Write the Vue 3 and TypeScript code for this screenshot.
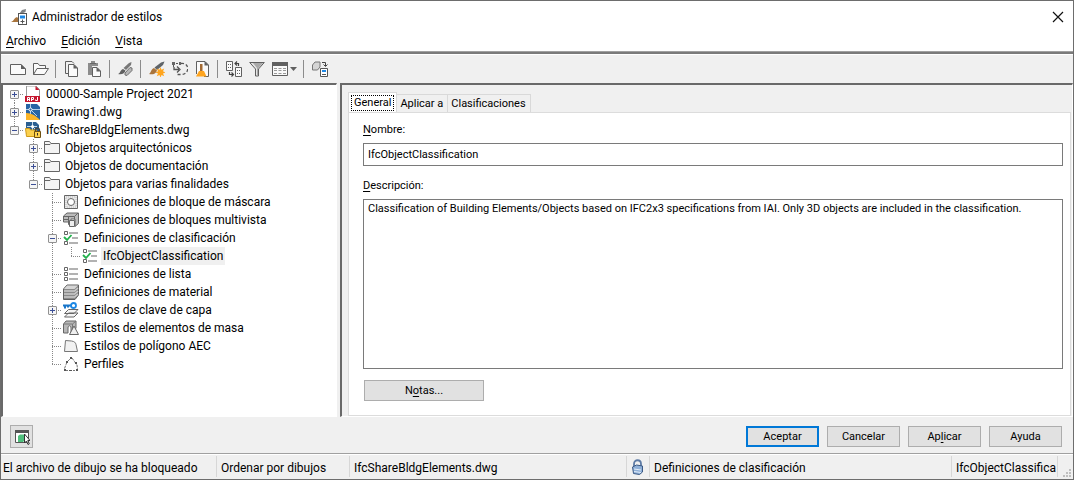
<script setup lang="ts">
import { ref } from 'vue'

type Guide = '' | 'v' | 't' | 'l'
interface TreeRow {
  label: string
  icon: string
  guides: Guide[]
  toggle?: '+' | '-'
}
interface ToolItem {
  icon?: string
  title?: string
  wide?: boolean
}

const icons: Record<string, string> = {
  app: `<path d="M0 13c3-1 3-4 6-5l2 2v3z" fill="#a9743c"/><path d="M7 6.500L11 1l4-1-.5 3L11 4.500 8 8z" fill="#808386"/><rect x="7.500" y="4.500" width="8" height="11" fill="#fff" stroke="#555"/><path d="M9 6.500h5v3H9z" fill="#1e88e5"/><path d="M9.500 12.500h4M11.500 10.500v4" stroke="#555" fill="none"/>`,
  blank: `<path d="M.5 3.500H11l4.500 4.500v5.500H.5z" fill="#fafafa" stroke="#606060"/><path d="M11 3v5h5z" fill="#606060"/>`,
  open: `<path d="M.5 13.500v-11h4.500l1.500 2h6v3M.5 13.500L4 7.500h11.500l-4 6z" fill="#fafafa" stroke="#606060"/>`,
  copy: `<path d="M4 12.500H1.500v-12H8l2 2" fill="none" stroke="#606060"/><path d="M4.500 3.500H10l3.500 3.500v8.500h-9z" fill="#fafafa" stroke="#606060"/><path d="M9.500 3v4.500H14z" fill="#606060"/>`,
  paste: `<path d="M1 2h3V0h4v2h3v3H5v9H1z" fill="#8c8c8c"/><path d="M3 2h6v1H3z" fill="#666"/><path d="M5.500 6.500H10l3.500 3.500v5.500h-8z" fill="#fafafa" stroke="#606060"/><path d="M9.500 6v4.500H14z" fill="#606060"/>`,
  purge: `<path d="M0 13c2 0 2-4 5-5l2.500 1.500C7 12 4 14 0 13z" fill="#606060"/><path d="M5.500 7L11 2l2.500-1L13 4 8 9z" fill="#777"/><path d="M7 12l5-5.500 2 .5v2.500l-5 5-2-.5z" fill="#b7b7b7" stroke="#707070"/>`,
  newstyle: `<path d="M0 13c2-1 2-5 5-6l3 2.500C7 13 3 14 0 13z" fill="#a9743c"/><path d="M5.500 6.500L12 1.500l3.500-1L14 4 8 9z" fill="#5f6468"/><path d="M11.500 6l1 2.800 2.700-1.200-1.200 2.700 2.500 1.200-2.500 1 1.200 2.800-2.700-1.200-1 2.600-1-2.600-2.700 1.200L9 12.500l-2.500-1L9 10.300 7.800 7.600l2.700 1.200z" fill="#ffa51f"/>`,
  reassign: `<path d="M1.500 6V2.500h7" fill="none" stroke="#555" stroke-dasharray="2 1"/><path d="M9 2.500c9-1 9 11 0 11H5" fill="none" stroke="#555" stroke-dasharray="3 2" stroke-width="1.300"/><path d="M2 6v2.500h5M5 5.500l3 3-3 3" fill="none" stroke="#555" stroke-width="1.300"/><path d="M0 1h3v3H0zM7 1h2v3H7z" fill="#666"/>`,
  broom: `<path d="M1.500 13V.5H10L13.500 4v11.500H9" fill="#fafafa" stroke="#606060"/><path d="M9.500 0v4.500H14z" fill="#606060"/><path d="M5 3h2.500v7H5z" fill="#a36a32"/><path d="M4 10h5l2.500 5.500H1z" fill="#ffa51f"/>`,
  swap: `<path d="M.5.500h6v9h-6zM9.500 6.500h6v9h-6z" fill="#fafafa" stroke="#606060"/><path d="M2 3.500h1M4 3.500h1M2 6.500h1M4 6.500h1M11 9.500h1M13 9.500h1M11 12.500h1M13 12.500h1" stroke="#606060"/><path d="M9 2.500h3.500v2.500M11 .5l-2 2 2 2M3.500 11v2.500H7M5.500 11.500l2 2-2 2" fill="none" stroke="#444" stroke-width="1.200"/>`,
  filter: `<path d="M.7 1.500h14.600L9.500 8v7h-3V8z" fill="#e4e4e4" stroke="#606060"/><path d="M4 2h10L9 7.500v7H8V7z" fill="#aaa"/>`,
  views: `<path d="M.5 1.500h15v13H.5z" fill="#fafafa" stroke="#606060"/><path d="M0 1h16v4H0z" fill="#606060"/><path d="M2 7.500h3M6.500 7.500h3M11 7.500h3M2 9.500h3M6.500 9.500h3M11 9.500h3M2 12.500h3M6.500 12.500h3M11 12.500h3" stroke="#999"/>`,
  sync: `<path d="M.5 4L3 1h5v5L5.500 9h-5z" fill="#d5d5d5" stroke="#777"/><path d="M10 1.500h3.500V5M11.500 3.500l2 2 2-2" fill="none" stroke="#444"/><path d="M8.500 7.500h7v8h-7z" fill="#fff" stroke="#555"/><path d="M10 9h4v2h-4z" fill="#1e88e5"/><path d="M10 13.500h4" stroke="#555"/>`,
  apj: `<path d="M1.500 0H11l3.500 3.500V11h-13z" fill="#fff" stroke="#999"/><path d="M10.500 0v4h4z" fill="#c5162e"/><path d="M0 10h15v6H0z" fill="#c5162e"/><path d="M2.500 15v-3.500h2V15M2.500 13.500h2M6.500 15v-3.500h2v2h-2M12.500 11v3.500h-2v-1" fill="none" stroke="#fff"/>`,
  dwg: `<path d="M1 0h11l3 3v13H1z" fill="#2764a5"/><path d="M1 9c6 0 10 3 14 7H1z" fill="#fbb52a"/><path d="M1 5.500h3M7 5.500h8M5.500 0v4M5.500 7v3M7 7l5 5" stroke="#b5cfe8" fill="none"/><circle cx="5.500" cy="5.500" r="1.500" fill="#2764a5" stroke="#fff"/>`,
  dwglock: `<path d="M1 0h10l3 3v9H1z" fill="#2b5f92"/><path d="M2 4.500h10M7.500 0v9M8 5l5 5" stroke="#c5d9ea"/><circle cx="7.500" cy="4.500" r="1.500" fill="#fff"/><path d="M.5 6.500h4l1 1.500h6v6.500h-10z" fill="#fbd04d" stroke="#d09a18"/><path d="M10.500 9.500V8c0-2.500 4-2.500 4 0v1.500" fill="none" stroke="#444" stroke-width="1.300"/><path d="M9.500 9.500h6v6h-6z" fill="#ffd24d" stroke="#6e5011"/><path d="M12.500 11v2.500" stroke="#333"/>`,
  folder: `<path d="M.5 13.500v-12h5l1.500 2h8.500v10z" fill="#f4f4f4" stroke="#666"/><path d="M.5 4.500H6l1-1" fill="none" stroke="#666"/>`,
  mask: `<path d="M1.500 1.500h13v13h-13z" fill="#e9e9e9" stroke="#666"/><path d="M3 3h10v10H3z" fill="none" stroke="#bbb" stroke-dasharray="1 1"/><circle cx="8" cy="8" r="3.500" fill="#fff" stroke="#666"/>`,
  multi: `<path d="M.5 4L4 1h11.500v10.500L12 14.500V7H8v5.500H5.500V10h-5z" fill="#bbb" stroke="#666"/><path d="M.5 4.500h11v3M11.500 4.500L15 1M5.500 4.500V10M.5 7.500h5" fill="none" stroke="#666"/><path d="M6.500 8.500h5v6h-5z" fill="#eee" stroke="#666"/>`,
  classif: `<path d="M1.500 1.500h3v3h-3zM1.500 11.500h3v3h-3z" fill="#fff" stroke="#666"/><path d="M6 3h9M9 8h6M6 13h9" stroke="#666" stroke-width="1.200"/><path d="M1 7l3 3 4.500-5" fill="none" stroke="#22b14c" stroke-width="1.800"/>`,
  list: `<path d="M1.500 1.500h3v3h-3zM1.500 6.500h3v3h-3zM1.500 11.500h3v3h-3z" fill="#fff" stroke="#666"/><path d="M6 3h9M6 8h9M6 13h9" stroke="#666" stroke-width="1.200"/>`,
  material: `<path d="M.5 5L4 1h11.500v10L12 15.500H.5z" fill="#8a8a8a" stroke="#606060"/><path d="M1 5h10.500L15 1.500H4z" fill="#d5d5d5"/><path d="M1 7h10.500L15 4M1 10h10.500L15 7M1 13h10.500L15 10" fill="none" stroke="#ccc" stroke-width="1.500"/>`,
  layerkey: `<path d="M1.500 11.500l4-4H15l-4 4zM1.500 15l4-4H15l-4 4z" fill="#f4f4f4" stroke="#666"/><path d="M0 3.500h9M2 3.500v3M5 3.500v2" stroke="#1976c9" stroke-width="2" fill="none"/><circle cx="10.500" cy="3.500" r="2.500" fill="#fff" stroke="#1e88e5" stroke-width="1.800"/>`,
  mass: `<path d="M.5 4L3 1h10v7l-3 5H8V8c0-3-3-3-3 0v5H.5z" fill="#b8b8b8" stroke="#666"/><path d="M1 4h8.500L13 1M9.500 4v6" stroke="#777" fill="none"/><path d="M11 6l4.500 8.500h-9z" fill="#efefef" stroke="#666"/>`,
  polygon: `<path d="M2.500 2.500l6 .5c3 .5 4 1.500 4.500 3.500l1.500 7H1.500z" fill="#f2f2f2" stroke="#777"/>`,
  profile: `<path d="M1.500 12.500L4 6l4-4M9 2l5 7 .5 4M2 14.500h10" fill="none" stroke="#777" stroke-dasharray="3 1"/><path d="M7 1h2v2H7zM3 5h2v2H3zM12 6h2v2h-2zM1 13h2v2H1zM6 14h3v1H6zM13 13h2v2h-2z" fill="#555"/>`,
  lock: `<path d="M4 7V5c0-5 7-5 7 0v3" fill="none" stroke="#5d7ba5" stroke-width="1.800"/><path d="M2.500 8l4-2 6 1v6l-3 2.500-6-1z" fill="#8fb0d8" stroke="#3c5a85"/><path d="M4 10l7 1M4 12.500l7 1" stroke="#e3edf8"/>`,
  preview: `<path d="M1.500 1.500h13v12h-13z" fill="#fff" stroke="#555"/><path d="M1 1h14v3H1z" fill="#555"/><path d="M4 7l2-1.500h4V12l-1 1H4z" fill="#4fbf7c"/><path d="M10.500 5v9l2-2 1.500 3.500 1.300-.7-1.500-3.300H16z" fill="#fff" stroke="#333"/>`,
}

const tools: ToolItem[] = [
  { icon: 'blank', title: 'Nuevo dibujo' },
  { icon: 'open', title: 'Abrir dibujo' },
  {},
  { icon: 'copy', title: 'Copiar' },
  { icon: 'paste', title: 'Pegar' },
  {},
  { icon: 'purge', title: 'Limpiar' },
  {},
  { icon: 'newstyle', title: 'Nuevo estilo' },
  { icon: 'reassign', title: 'Establecer desde' },
  { icon: 'broom', title: 'Limpiar estilos' },
  {},
  { icon: 'swap', title: 'Alternar vista' },
  { icon: 'filter', title: 'Filtrar' },
  { icon: 'views', title: 'Vistas', wide: true },
  {},
  { icon: 'sync', title: 'Sincronizar' },
]

const rows: TreeRow[] = [
  { label: '00000-Sample Project 2021', icon: 'apj', guides: ['t'], toggle: '+' },
  { label: 'Drawing1.dwg', icon: 'dwg', guides: ['t'], toggle: '+' },
  { label: 'IfcShareBldgElements.dwg', icon: 'dwglock', guides: ['l'], toggle: '-' },
  { label: 'Objetos arquitectónicos', icon: 'folder', guides: ['', 't'], toggle: '+' },
  { label: 'Objetos de documentación', icon: 'folder', guides: ['', 't'], toggle: '+' },
  { label: 'Objetos para varias finalidades', icon: 'folder', guides: ['', 'l'], toggle: '-' },
  { label: 'Definiciones de bloque de máscara', icon: 'mask', guides: ['', '', 't'] },
  { label: 'Definiciones de bloques multivista', icon: 'multi', guides: ['', '', 't'] },
  { label: 'Definiciones de clasificación', icon: 'classif', guides: ['', '', 't'], toggle: '-' },
  { label: 'IfcObjectClassification', icon: 'classif', guides: ['', '', 'v', 'l'] },
  { label: 'Definiciones de lista', icon: 'list', guides: ['', '', 't'] },
  { label: 'Definiciones de material', icon: 'material', guides: ['', '', 't'] },
  { label: 'Estilos de clave de capa', icon: 'layerkey', guides: ['', '', 't'], toggle: '+' },
  { label: 'Estilos de elementos de masa', icon: 'mass', guides: ['', '', 't'] },
  { label: 'Estilos de polígono AEC', icon: 'polygon', guides: ['', '', 't'] },
  { label: 'Perfiles', icon: 'profile', guides: ['', '', 'l'] },
]

const tabs = ['General', 'Aplicar a', 'Clasificaciones']
const activeTab = ref('General')
const selected = ref('IfcObjectClassification')
const nombre = ref('IfcObjectClassification')
const descripcion = ref(
  'Classification of Building Elements/Objects based on IFC2x3 specifications from IAI. Only 3D objects are included in the classification.',
)
</script>

<template>
  <div class="window">
    <header class="titlebar">
      <svg class="icon" viewBox="0 0 16 16" v-html="icons.app"></svg>
      <h1>Administrador de estilos</h1>
      <button class="close" aria-label="Cerrar">
        <svg width="12" height="12" viewBox="0 0 12 12"><path d="M1 1l10 10M11 1L1 11" stroke="#111" stroke-width="1.200" /></svg>
      </button>
    </header>
    <nav class="menu">
      <button><u>A</u>rchivo</button>
      <button><u>E</u>dición</button>
      <button><u>V</u>ista</button>
    </nav>
    <div class="toolbar">
      <template v-for="(t, i) in tools" :key="i">
        <button v-if="t.icon" class="tool" :class="{ wide: t.wide }" :aria-label="t.title">
          <svg class="icon" viewBox="0 0 16 16" v-html="icons[t.icon]"></svg>
          <svg v-if="t.wide" width="7" height="4" viewBox="0 0 7 4"><path d="M0 0h7L3.500 4z" fill="#606060" /></svg>
        </button>
        <span v-else class="sep"></span>
      </template>
    </div>

    <main class="body">
      <ul class="tree">
        <li v-for="row in rows" :key="row.label" class="row">
          <span v-for="(g, i) in row.guides" :key="i" class="guide" :class="g">
            <button
              v-if="row.toggle && i === row.guides.length - 1"
              class="toggle"
              :class="{ plus: row.toggle === '+' }"
              :aria-label="row.label"
            ></button>
          </span>
          <svg class="icon node" viewBox="0 0 16 16" v-html="icons[row.icon]"></svg>
          <button class="label" :class="{ selected: selected === row.label }" @click="selected = row.label">
            {{ row.label }}
          </button>
        </li>
      </ul>

      <section class="detail">
        <div class="tabs" role="tablist">
          <button
            v-for="tab in tabs"
            :key="tab"
            class="tab"
            role="tab"
            :aria-selected="activeTab === tab"
            :class="{ active: activeTab === tab }"
            @click="activeTab = tab"
          >
            <span>{{ tab }}</span>
          </button>
        </div>
        <div class="panel">
          <label for="nombre"><u>N</u>ombre:</label>
          <input id="nombre" v-model="nombre" type="text" />
          <label for="descripcion"><u>D</u>escripción:</label>
          <textarea id="descripcion" v-model="descripcion" spellcheck="false"></textarea>
          <button class="btn notes">N<u>o</u>tas...</button>
        </div>
      </section>
    </main>

    <footer class="actions">
      <button class="preview" aria-label="Vista previa">
        <svg class="icon" viewBox="0 0 16 16" v-html="icons.preview"></svg>
      </button>
      <button class="btn primary">Aceptar</button>
      <button class="btn">Cancelar</button>
      <button class="btn">Ap<u>l</u>icar</button>
      <button class="btn">Ayuda</button>
    </footer>

    <div class="status">
      <span class="cell c1">El archivo de dibujo se ha bloqueado</span>
      <span class="cell c2">Ordenar por dibujos</span>
      <span class="cell c3">IfcShareBldgElements.dwg</span>
      <span class="cell c4"><svg class="icon" viewBox="0 0 16 16" v-html="icons.lock"></svg></span>
      <span class="cell c5">Definiciones de clasificación</span>
      <span class="cell c6">IfcObjectClassifica</span>
      <svg class="grip" width="10" height="10" viewBox="0 0 10 10">
        <path d="M6 0h2v2H6zM3 3h2v2H3zM6 3h2v2H6zM0 6h2v2H0zM3 6h2v2H3zM6 6h2v2H6z" fill="#bfbfbf" />
      </svg>
    </div>
  </div>
</template>

<style>
body {
  background: #f0f0f0;
}
</style>

<style scoped>
.window {
  box-sizing: border-box;
  display: flex;
  flex-direction: column;
  min-height: 100vh;
  border: 1px solid #6d6d6d;
  background: #f0f0f0;
  color: #000;
  font: 12px/18px Roboto, 'Open Sans', sans-serif;
}
button {
  margin: 0;
  padding: 0;
  border: 0;
  background: none;
  color: inherit;
  font: inherit;
  white-space: nowrap;
}
u {
  text-underline-offset: 2px;
}
.icon {
  display: block;
  flex: none;
  width: 16px;
  height: 16px;
}
.titlebar {
  display: flex;
  align-items: center;
  height: 31px;
  padding: 0 9px 0 10px;
  background: #fff;
}
h1 {
  flex: 1;
  margin: 0 0 0 5px;
  font: inherit;
}
.close svg {
  display: block;
}
.menu {
  display: flex;
  align-items: flex-start;
  gap: 15px;
  height: 19px;
  padding: 0 5px;
  border-bottom: 1px solid #a0a0a0;
  background: #fff;
}
.toolbar {
  display: flex;
  align-items: center;
  height: 29px;
  padding-left: 5px;
  border-top: 2px solid #7a7a7a;
  box-shadow: inset 0 1px #fff;
}
.tool {
  display: flex;
  align-items: center;
  justify-content: center;
  width: 23px;
  height: 24px;
}
.wide {
  width: 32px;
  gap: 2px;
}
.sep {
  width: 1px;
  height: 18px;
  margin: 0 4px 0 3px;
  background: #8c8c8c;
}
.body {
  flex: 1;
  display: flex;
  gap: 3px;
}
.tree,
.detail {
  box-sizing: border-box;
  border: solid;
  border-width: 2px 1px 1px 2px;
  border-color: #696969 #fff #fff #696969;
}
.tree {
  flex: none;
  width: 336px;
  margin: 0;
  padding: 0 2px;
  background: #fff;
  list-style: none;
}
.row {
  display: flex;
  align-items: center;
  height: 18px;
}
.guide {
  display: flex;
  align-items: center;
  width: 19px;
  height: 18px;
  background-repeat: no-repeat;
}
.v {
  background-image: repeating-linear-gradient(#888 0 1px, transparent 1px 2px);
  background-size: 1px 18px;
  background-position: 9px 0;
}
.t,
.l {
  background-image: repeating-linear-gradient(#888 0 1px, transparent 1px 2px),
    repeating-linear-gradient(90deg, #888 0 1px, transparent 1px 2px);
  background-position: 9px 0, 9px 9px;
}
.t {
  background-size: 1px 18px, 10px 1px;
}
.l {
  background-size: 1px 9px, 10px 1px;
}
.row:first-child .t {
  background-size: 1px 9px, 10px 1px;
  background-position: 9px 9px, 9px 9px;
}
.toggle {
  box-sizing: border-box;
  width: 9px;
  height: 9px;
  margin: 1px 0 0 5px;
  border: 1px solid #919191;
  border-radius: 1px;
  background: linear-gradient(#3c4f96, #3c4f96) center / 5px 1px no-repeat, #f5f5f5;
}
.plus {
  background: linear-gradient(#3c4f96, #3c4f96) center / 5px 1px no-repeat,
    linear-gradient(#3c4f96, #3c4f96) center / 1px 5px no-repeat, #f5f5f5;
}
.node {
  margin: 0 3px 0 1px;
}
.label {
  height: 18px;
  padding: 0 2px;
}
.selected {
  background: #f0f0f0;
}
.detail,
.btn {
  font-size: 11px;
  line-height: 14px;
}
.detail {
  flex: 1;
  display: flex;
  flex-direction: column;
  min-width: 0;
  padding: 7px 1px 0 6px;
}
.tabs {
  display: flex;
  align-items: flex-end;
}
.tab {
  box-sizing: border-box;
  height: 18px;
  padding: 0 4px 0 3px;
  border: 1px solid #d9d9d9;
  border-width: 1px 1px 0 0;
}
.tab.active {
  height: 20px;
  padding: 0 2px;
  border-left-width: 1px;
  background: #fff;
}
.active span {
  display: block;
  padding: 0 2px;
  border: 1px dotted #000;
}
.panel {
  flex: 1;
  display: flex;
  flex-direction: column;
  padding: 10px 7px 14px 14px;
  border: 1px solid #dcdcdc;
  background: #fff;
}
label {
  margin-bottom: 6px;
}
input,
textarea {
  box-sizing: border-box;
  margin: 0;
  padding: 2px 4px;
  border: 1px solid #7a7a7a;
  border-radius: 0;
  background: #fff;
  color: #000;
  font: inherit;
  outline: 0;
}
input {
  height: 23px;
  margin-bottom: 13px;
}
textarea {
  flex: 1;
  min-height: 120px;
  resize: none;
}
.btn {
  box-sizing: border-box;
  width: 73px;
  height: 21px;
  border: 1px solid #adadad;
  background: #e1e1e1;
}
.notes {
  width: 120px;
  margin: 11px 0 0 1px;
}
.actions {
  box-sizing: border-box;
  display: flex;
  align-items: center;
  gap: 8px;
  height: 36px;
  padding: 3px 11px 0 9px;
}
.btn.primary {
  border: 2px solid #0078d7;
}
.preview {
  box-sizing: border-box;
  display: flex;
  align-items: center;
  justify-content: center;
  width: 23px;
  height: 23px;
  margin-right: auto;
  border: 1px solid #adadad;
  background: #e1e1e1;
}
.status {
  display: flex;
  align-items: center;
  height: 25px;
  border-top: 1px solid #a0a0a0;
  box-shadow: inset 0 1px #fff;
}
.cell {
  box-sizing: border-box;
  height: 21px;
  padding: 3px 0 0 4px;
  border-right: 1px solid #d7d7d7;
  overflow: hidden;
  white-space: nowrap;
}
.c1 {
  width: 216px;
  padding-left: 2px;
}
.c2 {
  width: 133px;
}
.c3 {
  flex: 1;
}
.c4 {
  width: 23px;
  padding-left: 3px;
}
.c5 {
  width: 302px;
}
.c6 {
  width: 106px;
}
.grip {
  align-self: flex-end;
  margin-left: 5px;
}
</style>
